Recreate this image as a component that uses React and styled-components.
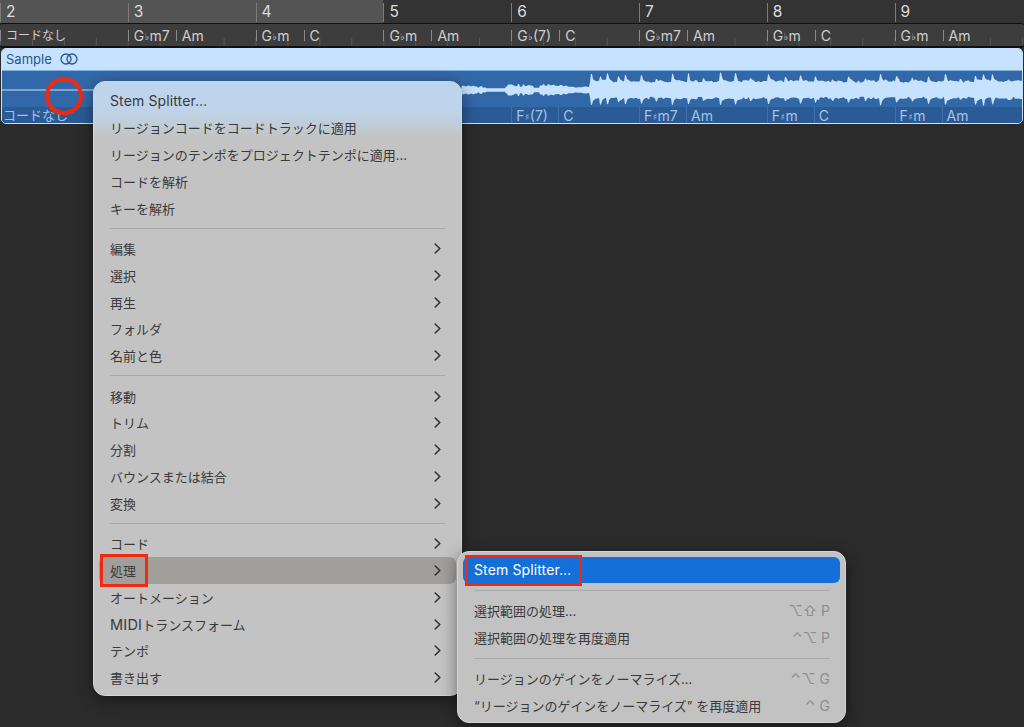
import React from 'react';
import styled, { createGlobalStyle } from 'styled-components';

const UI_FONT = `Inter, "Noto Sans CJK JP", "DejaVu Sans", sans-serif`;

const BARS = [
  { n: 2, sel: true, a: 'コードなし', lower: 'コードなし' },
  { n: 3, sel: true, a: ['G', '♭', 'm7'], b: 'Am', lower: ['F', '♯', 'm7'], lowerB: 'Am' },
  { n: 4, sel: true, a: ['G', '♭', 'm'], b: 'C', lower: ['F', '♯', 'm'], lowerB: 'C' },
  { n: 5, a: ['G', '♭', 'm'], b: 'Am', lower: ['F', '♯', 'm'], lowerB: 'Am' },
  { n: 6, a: ['G', '♭', '(7)'], b: 'C', lower: ['F', '♯', '(7)'], lowerB: 'C' },
  { n: 7, a: ['G', '♭', 'm7'], b: 'Am', lower: ['F', '♯', 'm7'], lowerB: 'Am' },
  { n: 8, a: ['G', '♭', 'm'], b: 'C', lower: ['F', '♯', 'm'], lowerB: 'C' },
  { n: 9, a: ['G', '♭', 'm'], b: 'Am', lower: ['F', '♯', 'm'], lowerB: 'Am' },
];

const MAIN_MENU = [
  ['Stem Splitter…', 'リージョンコードをコードトラックに適用', 'リージョンのテンポをプロジェクトテンポに適用…', 'コードを解析', 'キーを解析'],
  ['編集', '選択', '再生', 'フォルダ', '名前と色'],
  ['移動', 'トリム', '分割', 'バウンスまたは結合', '変換'],
  ['コード', '処理', 'オートメーション', 'MIDIトランスフォーム', 'テンポ', '書き出す'],
];

// x position and strength of the loud hits in the waveform
const SPIKES = [
  [591, 1], [600, 0.8], [607, 0.9], [618, 0.6], [625, 0.9], [641, 0.7], [656, 0.4], [672, 0.95],
  [688, 0.85], [703, 0.3], [720, 1], [735, 0.9], [750, 0.3], [768, 0.85], [785, 0.45], [800, 0.7],
  [815, 0.75], [832, 0.3], [848, 0.65], [865, 0.5], [880, 0.9], [896, 0.7], [912, 0.45], [928, 0.7],
  [945, 0.85], [960, 0.3], [975, 0.8], [983, 0.95], [992, 0.85], [1008, 0.4],
];

const noise = (x) => {
  const v = Math.sin(x * 12.9898) * 43758.5453;
  return v - Math.floor(v);
};

// noise held for a couple of pixels, so the edge looks stepped and not hairy
const stepNoise = (x, seed) => noise(Math.floor(x / 2.5) + seed);

const quietAmp = (x) => {
  if (x < 462) return 0.6;
  if (x < 473) return 3.5 + stepNoise(x, 3) * 1.5;
  if (x < 486) return 1.8 + stepNoise(x, 5) * 2.5;
  if (x < 506) return 1.7;
  if (x < 534) return 3 + stepNoise(x, 9) * 3;
  if (x < 540) return 2.2;
  if (x < 568) return 3 + stepNoise(x, 11) * 3.2;
  return 2.4 + stepNoise(x, 13) * 1.2;
};

const buildWave = () => {
  const top = [];
  const bottom = [];
  for (let x = 0; x <= 1024; x += 1) {
    let up;
    let down;
    if (x < 590) {
      up = quietAmp(x);
      down = up;
    } else {
      let hit = 0;
      let hitDown = 0;
      SPIKES.forEach(([s, power]) => {
        if (x >= s) {
          const shape = x - s < 2 ? 1 : Math.exp(-(x - s) / 1.8) + 0.14 * Math.exp(-(x - s) / 9);
          hit = Math.max(hit, 8 * power * shape);
          hitDown = Math.max(hitDown, 7.5 * power * shape);
        }
      });
      up = 7 + stepNoise(x, 21) * 2.6 + hit;
      down = 6.5 + stepNoise(x, 37) * 2.4 + hitDown;
    }
    top.push(`${x},${(19 - up).toFixed(1)}`);
    bottom.unshift(`${x},${(19 + down).toFixed(1)}`);
  }
  return `M${top.join(' L')} L${bottom.join(' L')} Z`;
};

const WAVE_PATH = buildWave();

const GlobalStyle = createGlobalStyle`
  html, body {
    margin: 0;
    background: #2b2b2b;
    overflow: hidden;
  }
`;

const Page = styled.div`
  position: relative;
  width: 1024px;
  height: 727px;
  overflow: hidden;
  background: #2b2b2b;
  font-family: ${UI_FONT};
`;

const Ruler = styled.div`
  display: grid;
  grid-template-columns: repeat(8, 127.8px);
  height: 23px;
  background: #333;
`;

const RulerBar = styled.div`
  padding-top: 3px;
  background: ${(p) => (p.$selected ? '#545454' : '#333')};
`;

const BarNumber = styled.div`
  height: 19px;
  padding-left: 5px;
  border-left: 1px solid #7b7b7b;
  color: #dcdcdc;
  font-size: 15.5px;
  line-height: 17px;
`;

const ChordTrack = styled.div`
  display: grid;
  grid-template-columns: repeat(8, 127.8px);
  height: 22px;
  border-top: 1px solid #111;
  border-bottom: 2px solid #111;
  border-radius: 3px;
  background-color: #3d3d3d;
  background-image: linear-gradient(to right, #555 1px, transparent 1px);
  background-size: 31.95px 8px;
  background-position: 0 bottom;
  background-repeat: repeat-x;
`;

const ChordBar = styled.div`
  display: grid;
  grid-template-columns: 48px 1fr;
  align-items: center;
  padding-top: 1px;
`;

const Chord = styled.div`
  height: 11px;
  padding-left: 5px;
  border-left: 1px solid #8a8a8a;
  color: #cfcfcf;
  font-size: ${(p) => (p.$kana ? '12px' : '14px')};
  line-height: 11px;
  white-space: nowrap;
`;

const Accidental = styled.span`
  font-family: "DejaVu Sans", sans-serif;
  font-size: 9px;
  position: relative;
  top: -1px;
  margin: 0 0.5px;
`;

const Region = styled.div`
  position: relative;
  width: 1022px;
  height: 76px;
  margin: 0 1px;
  box-sizing: border-box;
  overflow: hidden;
  border: 1px solid #c6e2ff;
  border-radius: 5px;
  background: #3368a8;
`;

const RegionHeader = styled.div`
  display: flex;
  align-items: center;
  gap: 8px;
  height: 20px;
  padding: 0 0 1px 4px;
  background: #c6e2ff;
  border-bottom: 1px solid #7fb0e2;
  color: #23578f;
  font-size: 13px;
`;

const WaveArea = styled.div`
  height: 36px;
  margin-left: -2px;
  background: #3368a8;
`;

const Wave = styled.svg`
  display: block;
  width: 1024px;
  height: 36px;
  path {
    fill: #c6e2ff;
  }
`;

const RegionChords = styled.div`
  display: grid;
  grid-template-columns: repeat(8, 127.8px);
  height: 17px;
  margin-left: -2px;
  background: #2b5b95;
`;

const LowerBar = styled.div`
  display: grid;
  grid-template-columns: 47px 1fr;
`;

const LowerChord = styled.div`
  padding-left: ${(p) => (p.$kana ? '2px' : '4px')};
  border-left: 1px solid #3f70ab;
  color: #a4c3e4;
  font-size: ${(p) => (p.$kana ? '13px' : '14px')};
  line-height: 17px;
  white-space: nowrap;
`;

const CircleMark = styled.div`
  position: absolute;
  left: 43px;
  top: 28px;
  width: 30px;
  height: 30px;
  border: 4px solid #f2290f;
  border-radius: 50%;
`;

const MainMenu = styled.div`
  position: absolute;
  left: 93px;
  top: 81px;
  width: 369px;
  height: 615px;
  box-sizing: border-box;
  padding: 5.5px 5px 4px;
  border-radius: 12px;
  border: 1px solid #d4d4d4;
  background: linear-gradient(#bdd4ee 0, #bfd4eb 26px, #c0cdd9 42px, #c3c3c3 56px);
  box-shadow: 0 4px 16px rgba(0, 0, 0, 0.45);
`;

const SubMenu = styled.div`
  position: absolute;
  left: 457px;
  top: 551px;
  width: 389px;
  height: 172px;
  box-sizing: border-box;
  padding: 4.5px 5px;
  border-radius: 12px;
  border: 1px solid #d4d4d4;
  background: #c2c2c2;
  box-shadow: 0 4px 16px rgba(0, 0, 0, 0.45);
`;

const Row = styled.div`
  position: relative;
  display: flex;
  align-items: center;
  justify-content: space-between;
  height: 26.8px;
  padding: 0 ${(p) => (p.$sub ? '10px' : '15px')} 0 11px;
  border-radius: 6px;
  background: ${(p) => (p.$selected ? '#1470d8' : p.$open ? '#a19f9c' : 'transparent')};
  color: ${(p) => (p.$selected ? '#fff' : '#3a3a3a')};
  font-size: ${(p) => (p.$latin ? '14px' : '13px')};
  letter-spacing: ${(p) => (p.$latin ? '0.12px' : '0')};
  white-space: nowrap;
`;

const Latin = styled.span`
  font-size: 14.5px;
  letter-spacing: 0.2px;
`;

const Separator = styled.div`
  height: 1px;
  margin: ${(p) => (p.$tight ? '6.3px 11px' : '7px 11px 6px')};
  background: #a9a9a9;
`;

const Shortcut = styled.span`
  color: #8e8e8e;
  font-size: 14px;
`;

const Chevron = styled.svg`
  width: 7px;
  height: 11px;
  fill: none;
  stroke: #333;
  stroke-width: 1.6;
  stroke-linecap: round;
  stroke-linejoin: round;
`;

const ProcessMark = styled.div`
  position: absolute;
  left: 1px;
  top: -3px;
  width: 42px;
  height: 27px;
  border: 3px solid #f2290f;
`;

const StemMark = styled.div`
  position: absolute;
  left: 2px;
  top: -1.5px;
  width: 111px;
  height: 25px;
  border: 3px solid #f2290f;
`;

const ChordLabel = ({ value }) => {
  if (typeof value === 'string') return value;
  return (
    <>
      {value[0]}
      <Accidental>{value[1]}</Accidental>
      {value[2]}
    </>
  );
};

const MenuArrow = () => (
  <Chevron viewBox="0 0 7 11">
    <path d="M1.2 1 L5.8 5.5 L1.2 10" />
  </Chevron>
);

const LoopIcon = () => (
  <svg width="18" height="12" viewBox="0 0 18 12" fill="none" stroke="#23578f" strokeWidth="1.3">
    <circle cx="6" cy="6" r="5" />
    <circle cx="12" cy="6" r="5" />
  </svg>
);

const menuLabel = (label) => {
  if (label.startsWith('MIDI')) {
    return (
      <span>
        <Latin>MIDI</Latin>
        {label.slice(4)}
      </span>
    );
  }
  return label;
};

const App = () => (
  <Page>
    <GlobalStyle />
    <Ruler>
      {BARS.map((bar) => (
        <RulerBar key={bar.n} $selected={bar.sel}>
          <BarNumber>{bar.n}</BarNumber>
        </RulerBar>
      ))}
    </Ruler>
    <ChordTrack>
      {BARS.map((bar) => (
        <ChordBar key={bar.n}>
          <Chord $kana={!bar.b}><ChordLabel value={bar.a} /></Chord>
          {bar.b && <Chord><ChordLabel value={bar.b} /></Chord>}
        </ChordBar>
      ))}
    </ChordTrack>
    <Region>
      <RegionHeader>
        Sample
        <LoopIcon />
      </RegionHeader>
      <WaveArea>
        <Wave viewBox="0 0 1024 36">
          <path d={WAVE_PATH} />
        </Wave>
      </WaveArea>
      <RegionChords>
        {BARS.map((bar) => (
          <LowerBar key={bar.n}>
            <LowerChord $kana={!bar.lowerB}><ChordLabel value={bar.lower} /></LowerChord>
            {bar.lowerB && <LowerChord><ChordLabel value={bar.lowerB} /></LowerChord>}
          </LowerBar>
        ))}
      </RegionChords>
      <CircleMark />
    </Region>

    <MainMenu>
      {MAIN_MENU.map((group, i) => (
        <React.Fragment key={group[0]}>
          {i > 0 && <Separator $tight />}
          {group.map((label) => (
            <Row key={label} $open={label === '処理'} $latin={label.startsWith('Stem')}>
              {menuLabel(label)}
              {i > 0 && <MenuArrow />}
              {label === '処理' && <ProcessMark />}
            </Row>
          ))}
        </React.Fragment>
      ))}
    </MainMenu>

    <SubMenu>
      <Row $sub $selected $latin>
        Stem Splitter…
        <StemMark />
      </Row>
      <Separator />
      <Row $sub>選択範囲の処理…<Shortcut>⌥⇧ P</Shortcut></Row>
      <Row $sub>選択範囲の処理を再度適用<Shortcut>⌃⌥ P</Shortcut></Row>
      <Separator />
      <Row $sub>リージョンのゲインをノーマライズ…<Shortcut>⌃⌥ G</Shortcut></Row>
      <Row $sub>“リージョンのゲインをノーマライズ” を再度適用<Shortcut>⌃ G</Shortcut></Row>
    </SubMenu>
  </Page>
);

export default App;
